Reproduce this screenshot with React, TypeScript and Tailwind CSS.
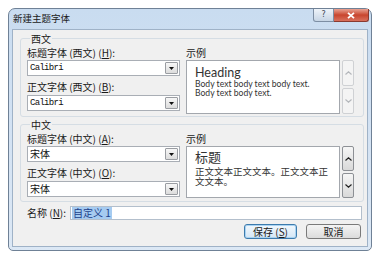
const CJK = "font-['Noto_Sans_CJK_SC','Noto_Sans',sans-serif]";

function Combo({ value, mono }: { value: string; mono?: boolean }) {
  return (
    <div className="h-[16px] w-[153px] flex items-center justify-between border border-[#a9aeb5] bg-white">
      <span
        className={
          mono
            ? "pl-[2px] font-['Liberation_Mono',monospace] text-[9px] tracking-[-0.7px] leading-[14px] text-[#111]"
            : `pl-[2px] ${CJK} text-[10px] leading-[14px] text-[#111]`
        }
      >
        {value}
      </span>
      <div className="mr-[1px] h-[12px] w-[13px] flex items-center justify-center rounded-[1px] border border-[#9a9da2] bg-gradient-to-b from-[#f7f7f7] to-[#dcdcdc]">
        <svg width="5" height="3" viewBox="0 0 5 3">
          <path d="M0 0h5L2.5 3z" fill="#111" />
        </svg>
      </div>
    </div>
  );
}

function ScrollBtn({ up, enabled, h }: { up?: boolean; enabled?: boolean; h: string }) {
  return (
    <div
      className={`${h} w-[12px] flex items-center justify-center rounded-[2px] border ${
        enabled
          ? "border-[#8d9095] bg-gradient-to-b from-[#f6f6f6] to-[#d9d9d9]"
          : "border-[#cfd1d4] bg-[#f4f4f4]"
      }`}
    >
      <svg width="7" height="4" viewBox="0 0 7 4">
        <path
          d={up ? "M0.5 3.5L3.5 0.8L6.5 3.5" : "M0.5 0.5L3.5 3.2L6.5 0.5"}
          fill="none"
          stroke={enabled ? "#222" : "#b4b7bb"}
          strokeWidth="1.2"
        />
      </svg>
    </div>
  );
}

function Label({ children }: { children: React.ReactNode }) {
  return <div className={`h-[12px] ${CJK} text-[10px] leading-[12px] text-[#1a1a1a] whitespace-nowrap`}>{children}</div>;
}

export default function App() {
  return (
    <div className="w-[392px] h-[261px] bg-white pt-[8px] pl-[8px]">
      <div className="w-[364px] h-[243px] flex flex-col rounded-t-[7px] rounded-b-[5px] border border-[#6f8196] bg-gradient-to-b from-[#c9dcf0] via-[#d3e2f3] to-[#dce8f5]">
        {/* title bar */}
        <div className="h-[20px] flex justify-between">
          <span className={`pl-[4px] pt-[3px] ${CJK} text-[9.5px] leading-[12px] text-[#1a1a1a]`}>新建主题字体</span>
          <div className="flex mr-[2px]">
            <div className="h-[13px] w-[21px] flex items-center justify-center rounded-bl-[3px] border border-t-0 border-[#7d8ea3] bg-gradient-to-b from-[#eef3f9] to-[#c7d5e5]">
              <span className="font-['DejaVu_Sans',sans-serif] text-[8px] leading-[8px] text-[#3c4654]">?</span>
            </div>
            <div className="h-[13px] w-[35px] flex items-center justify-center rounded-br-[3px] border border-t-0 border-l-0 border-[#8a3a30] bg-gradient-to-b from-[#e8a293] via-[#c8452e] to-[#d9705c]">
              <svg width="8" height="7" viewBox="0 0 8 7">
                <path d="M1 0.8L7 6.2M7 0.8L1 6.2" stroke="#fff" strokeWidth="1.8" />
              </svg>
            </div>
          </div>
        </div>

        {/* client area */}
        <div className="mx-[3px] mb-[3px] flex-1 flex flex-col border border-[#9fb2c7] bg-[#f0f0f0] pl-[7px] pr-[3px]">
          {/* 西文 */}
          <fieldset className="mt-[3px] rounded-[3px] border border-[#d5dde4] pl-[6px] pt-[3px] pb-[2px]">
            <legend className={`ml-[3px] px-[1px] ${CJK} text-[10px] leading-[11px] text-[#1a1a1a]`}>西文</legend>
            <div className="flex gap-[6px]">
              <div className="flex flex-col">
                <Label>
                  标题字体 (西文) (<u>H</u>):
                </Label>
                <div className="mt-[1px]">
                  <Combo value="Calibri" mono />
                </div>
                <div className="mt-[5px]">
                  <Label>
                    正文字体 (西文) (<u>B</u>):
                  </Label>
                </div>
                <div className="mt-[2px]">
                  <Combo value="Calibri" mono />
                </div>
              </div>
              <div className="flex flex-col">
                <Label>示例</Label>
                <div className="mt-[1px] flex gap-[2px]">
                  <div className="h-[54px] w-[154px] border border-[#a3a7ad] bg-white pl-[8px] pt-[4px] text-[#333]">
                    <div className="font-['Lato',sans-serif] text-[12.5px] leading-[15px]">Heading</div>
                    <div className="font-['Lato',sans-serif] text-[8.6px] leading-[9px]">Body text body text body text.</div>
                    <div className="font-['Lato',sans-serif] text-[8.6px] leading-[9px]">Body text body text.</div>
                  </div>
                  <div className="flex flex-col gap-[2px]">
                    <ScrollBtn up h="h-[26px]" />
                    <ScrollBtn h="h-[26px]" />
                  </div>
                </div>
              </div>
            </div>
          </fieldset>

          {/* 中文 */}
          <fieldset className="mt-[2px] rounded-[3px] border border-[#d5dde4] pl-[6px] pt-[3px] pb-[3px]">
            <legend className={`ml-[3px] px-[1px] ${CJK} text-[10px] leading-[11px] text-[#1a1a1a]`}>中文</legend>
            <div className="flex gap-[6px]">
              <div className="flex flex-col">
                <Label>
                  标题字体 (中文) (<u>A</u>):
                </Label>
                <div className="mt-[1px]">
                  <Combo value="宋体" />
                </div>
                <div className="mt-[5px]">
                  <Label>
                    正文字体 (中文) (<u>O</u>):
                  </Label>
                </div>
                <div className="mt-[2px]">
                  <Combo value="宋体" />
                </div>
              </div>
              <div className="flex flex-col">
                <Label>示例</Label>
                <div className="mt-[1px] flex gap-[2px]">
                  <div className={`h-[52px] w-[154px] border border-[#a3a7ad] bg-white pl-[8px] pr-[6px] text-[#333] ${CJK}`}>
                    <div className="text-[13px] leading-[19px]">标题</div>
                    <div className="text-[9.5px] leading-[10px]">正文文本正文文本。正文文本正文文本。</div>
                  </div>
                  <div className="flex flex-col gap-[2px]">
                    <ScrollBtn up enabled h="h-[25px]" />
                    <ScrollBtn enabled h="h-[25px]" />
                  </div>
                </div>
              </div>
            </div>
          </fieldset>

          {/* name row */}
          <div className="mt-[4px] flex items-center pl-[7px]">
            <span className={`w-[43px] ${CJK} text-[10px] leading-[12px] text-[#1a1a1a]`}>
              名称 (<u>N</u>):
            </span>
            <div className="h-[14px] w-[292px] flex items-center border border-[#b3bfcc] bg-white pl-[1px]">
              <span className={`bg-[#a6cbf0] px-[1px] ${CJK} text-[10px] leading-[12px] text-[#1c3f8a]`}>自定义 1</span>
            </div>
          </div>

          {/* buttons */}
          <div className="mt-[4px] flex justify-end gap-[9px] pr-[3px]">
            <button className={`h-[15px] w-[53px] rounded-[3px] border border-[#3d7bad] bg-gradient-to-b from-[#f2f8fd] to-[#d4e6f5] shadow-[inset_0_0_0_1px_#a9d3f2] ${CJK} text-[10px] leading-[12px] text-[#1a1a1a]`}>
              保存 (<u>S</u>)
            </button>
            <button className={`h-[15px] w-[55px] rounded-[3px] border border-[#7a7a7a] bg-gradient-to-b from-[#f4f4f4] to-[#dcdcdc] ${CJK} text-[10px] leading-[12px] text-[#1a1a1a]`}>
              取消
            </button>
          </div>
        </div>
      </div>
    </div>
  );
}
